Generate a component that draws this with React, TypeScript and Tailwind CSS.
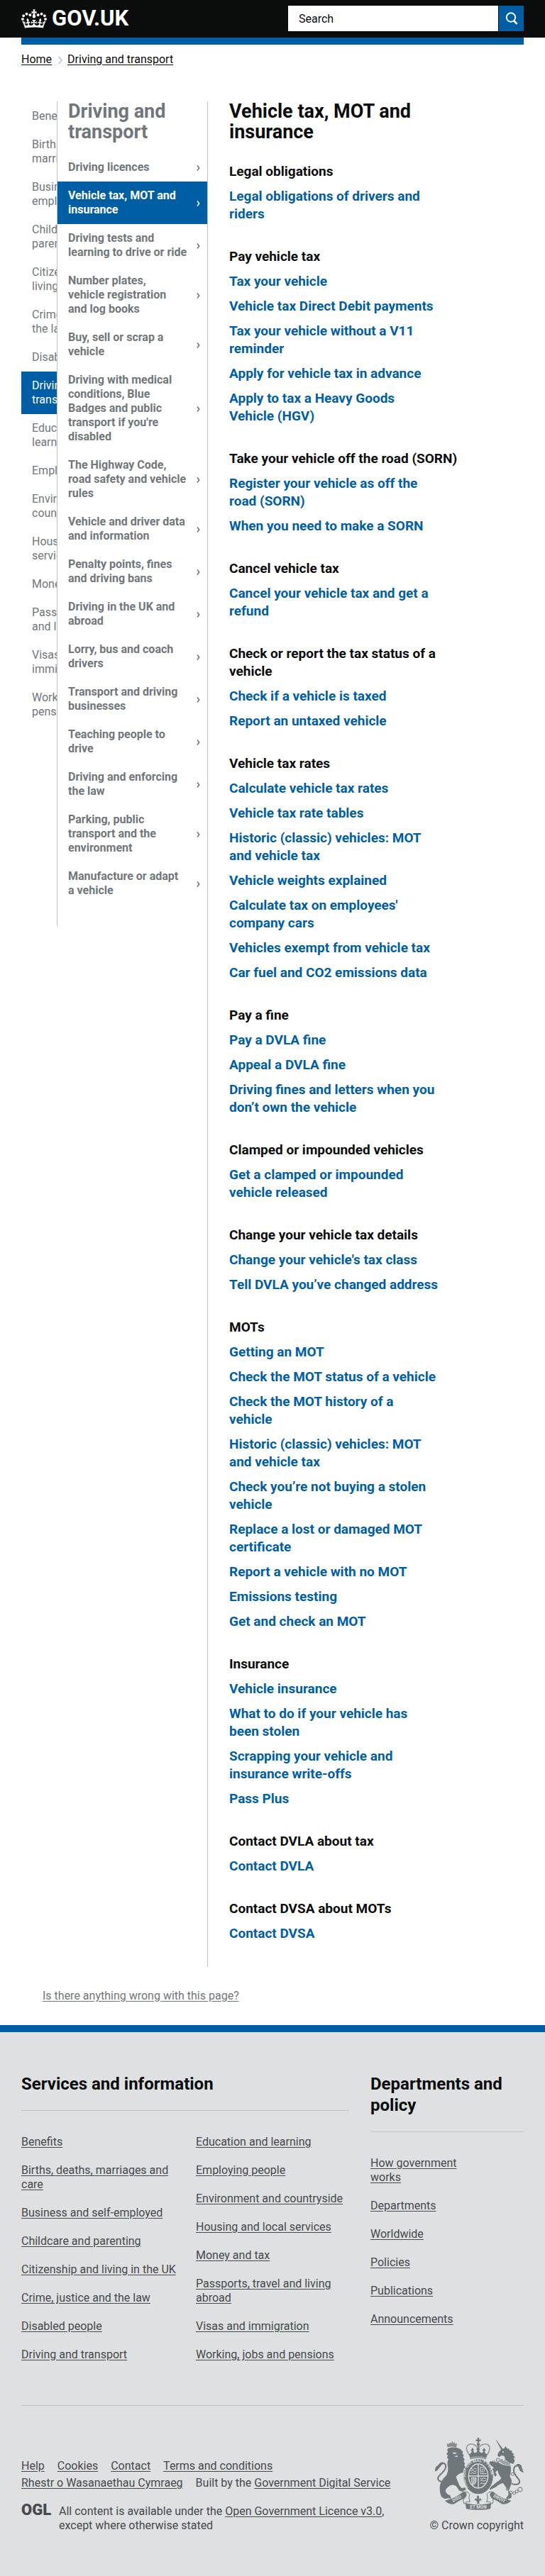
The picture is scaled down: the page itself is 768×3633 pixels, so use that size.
import type { ReactNode } from "react";

type Group = { title: string; links: string[] };

const topics = [
  "Benefits",
  "Births, deaths,\nmarriages and care",
  "Business and self-\nemployed",
  "Childcare and\nparenting",
  "Citizenship and\nliving in the UK",
  "Crime, justice and\nthe law",
  "Disabled people",
  "Driving and\ntransport",
  "Education and\nlearning",
  "Employing people",
  "Environment and\ncountryside",
  "Housing and local\nservices",
  "Money and tax",
  "Passports, travel\nand living abroad",
  "Visas and\nimmigration",
  "Working, jobs and\npensions",
];

const sections = [
  "Driving licences",
  "Vehicle tax, MOT and\ninsurance",
  "Driving tests and\nlearning to drive or ride",
  "Number plates,\nvehicle registration\nand log books",
  "Buy, sell or scrap a\nvehicle",
  "Driving with medical\nconditions, Blue\nBadges and public\ntransport if you're\ndisabled",
  "The Highway Code,\nroad safety and vehicle\nrules",
  "Vehicle and driver data\nand information",
  "Penalty points, fines\nand driving bans",
  "Driving in the UK and\nabroad",
  "Lorry, bus and coach\ndrivers",
  "Transport and driving\nbusinesses",
  "Teaching people to\ndrive",
  "Driving and enforcing\nthe law",
  "Parking, public\ntransport and the\nenvironment",
  "Manufacture or adapt\na vehicle",
];

const groups: Group[] = [
  { title: "Legal obligations", links: ["Legal obligations of drivers and\nriders"] },
  {
    title: "Pay vehicle tax",
    links: [
      "Tax your vehicle",
      "Vehicle tax Direct Debit payments",
      "Tax your vehicle without a V11\nreminder",
      "Apply for vehicle tax in advance",
      "Apply to tax a Heavy Goods\nVehicle (HGV)",
    ],
  },
  {
    title: "Take your vehicle off the road (SORN)",
    links: ["Register your vehicle as off the\nroad (SORN)", "When you need to make a SORN"],
  },
  { title: "Cancel vehicle tax", links: ["Cancel your vehicle tax and get a\nrefund"] },
  {
    title: "Check or report the tax status of a\nvehicle",
    links: ["Check if a vehicle is taxed", "Report an untaxed vehicle"],
  },
  {
    title: "Vehicle tax rates",
    links: [
      "Calculate vehicle tax rates",
      "Vehicle tax rate tables",
      "Historic (classic) vehicles: MOT\nand vehicle tax",
      "Vehicle weights explained",
      "Calculate tax on employees'\ncompany cars",
      "Vehicles exempt from vehicle tax",
      "Car fuel and CO2 emissions data",
    ],
  },
  {
    title: "Pay a fine",
    links: ["Pay a DVLA fine", "Appeal a DVLA fine", "Driving fines and letters when you\ndon’t own the vehicle"],
  },
  { title: "Clamped or impounded vehicles", links: ["Get a clamped or impounded\nvehicle released"] },
  {
    title: "Change your vehicle tax details",
    links: ["Change your vehicle's tax class", "Tell DVLA you’ve changed address"],
  },
  {
    title: "MOTs",
    links: [
      "Getting an MOT",
      "Check the MOT status of a vehicle",
      "Check the MOT history of a\nvehicle",
      "Historic (classic) vehicles: MOT\nand vehicle tax",
      "Check you’re not buying a stolen\nvehicle",
      "Replace a lost or damaged MOT\ncertificate",
      "Report a vehicle with no MOT",
      "Emissions testing",
      "Get and check an MOT",
    ],
  },
  {
    title: "Insurance",
    links: [
      "Vehicle insurance",
      "What to do if your vehicle has\nbeen stolen",
      "Scrapping your vehicle and\ninsurance write-offs",
      "Pass Plus",
    ],
  },
  { title: "Contact DVLA about tax", links: ["Contact DVLA"] },
  { title: "Contact DVSA about MOTs", links: ["Contact DVSA"] },
];

const footerServices = [
  [
    "Benefits",
    "Births, deaths, marriages and\ncare",
    "Business and self-employed",
    "Childcare and parenting",
    "Citizenship and living in the UK",
    "Crime, justice and the law",
    "Disabled people",
    "Driving and transport",
  ],
  [
    "Education and learning",
    "Employing people",
    "Environment and countryside",
    "Housing and local services",
    "Money and tax",
    "Passports, travel and living\nabroad",
    "Visas and immigration",
    "Working, jobs and pensions",
  ],
];

const footerPolicy = ["How government\nworks", "Departments", "Worldwide", "Policies", "Publications", "Announcements"];

function Crown() {
  return (
    <svg viewBox="0 0 132 97" className="h-[27px] w-[36px]" fill="currentColor" aria-hidden="true">
      <path d="M25 30.2c3.5 1.5 7.7-.2 9.1-3.7 1.5-3.6-.2-7.8-3.9-9.2-3.6-1.4-7.6.3-9.1 3.9-1.4 3.5.3 7.5 3.9 9zM9 39.5c3.6 1.5 7.8-.2 9.2-3.7 1.5-3.6-.2-7.8-3.9-9.1-3.6-1.5-7.6.2-9.1 3.8-1.4 3.5.3 7.5 3.8 9zM4.4 57.2c3.5 1.5 7.7-.2 9.1-3.8 1.5-3.6-.2-7.7-3.9-9.1-3.5-1.5-7.6.3-9.1 3.8-1.4 3.5.3 7.6 3.9 9.1zm38.3-21.4c3.5 1.5 7.7-.2 9.1-3.8 1.5-3.6-.2-7.7-3.9-9.1-3.6-1.5-7.6.3-9.1 3.8-1.3 3.6.4 7.7 3.9 9.1zm64.4-5.6c-3.6 1.5-7.8-.2-9.1-3.7-1.5-3.6.2-7.8 3.8-9.2 3.6-1.4 7.7.3 9.2 3.9 1.3 3.5-.4 7.5-3.9 9zm15.9 9.3c-3.6 1.5-7.7-.2-9.1-3.7-1.5-3.6.2-7.8 3.7-9.1 3.6-1.5 7.7.2 9.2 3.8 1.5 3.5-.3 7.5-3.8 9zm4.7 17.7c-3.6 1.5-7.8-.2-9.2-3.8-1.5-3.6.2-7.7 3.9-9.1 3.6-1.5 7.7.3 9.2 3.8 1.3 3.5-.4 7.6-3.9 9.1zM89.3 35.8c-3.6 1.5-7.8-.2-9.2-3.8-1.4-3.6.2-7.7 3.9-9.1 3.6-1.5 7.7.3 9.2 3.8 1.4 3.6-.3 7.7-3.9 9.1zM69.7 17.7l8.9 4.7V9.3l-8.9 2.8c-.2-.3-.5-.6-.9-.9L72.4 0H59.6l3.5 11.2c-.3.3-.6.5-.9.9l-8.8-2.8v13.1l8.8-4.7c.3.3.6.7.9.9l-5 15.4v.1c-.2.8-.4 1.6-.4 2.4 0 4.1 3.1 7.5 7 8.1h.2c.3 0 .7.1 1 .1.4 0 .7 0 1-.1h.2c4-.6 7.1-4.1 7.1-8.1 0-.8-.1-1.7-.4-2.4V34l-5.1-15.4c.4-.2.7-.6 1-.9zM66 92.8c16.9 0 32.8 1.1 47.1 3.2 4-16.9 8.9-26.7 14-33.5l-9.6-3.4c1 4.9 1.1 7.2 0 10.2-1.5-1.4-3-4.3-4.2-8.7L108.6 76c2.8-2 5-3.2 7.5-3.3-4.4 9.4-10 11.9-13.6 11.2-4.3-.8-6.3-4.6-5.6-7.9 1-4.7 5.7-5.9 8-.5 4.3-8.7-3-11.4-7.6-8.8 7.1-7.2 7.9-13.5 2.1-21.1-8 6.1-8.1 12.3-4.5 20.8-4.7-5.4-12.1-2.5-9.5 6.2 3.4-5.2 7.9-2 7.2 3.1-.6 4.3-6.4 7.8-13.5 7.2-10.3-.9-10.9-8-11.2-13.8 2.5-.5 7.1 1.8 11 7.3L80.2 60c-4.1 4.4-8 5.3-12.3 5.4 1.4-4.4 8-11.6 8-11.6H55.5s6.4 7.2 7.9 11.6c-4.2-.1-8-1-12.3-5.4l1.4 16.4c3.9-5.5 8.5-7.7 10.9-7.3-.3 5.8-.9 12.8-11.1 13.8-7.2.6-12.9-2.9-13.5-7.2-.7-5 3.8-8.3 7.1-3.1 2.7-8.7-4.6-11.6-9.4-6.2 3.7-8.5 3.6-14.7-4.6-20.8-5.8 7.6-5 13.9 2.2 21.1-4.7-2.6-11.9.1-7.7 8.8 2.3-5.5 7.1-4.2 8.1.5.7 3.3-1.3 7.1-5.7 7.9-3.5.7-9-1.8-13.5-11.2 2.5.1 4.7 1.3 7.5 3.3l-4.7-15.4c-1.2 4.4-2.7 7.2-4.3 8.7-1.1-3-.9-5.3 0-10.2l-9.5 3.4c5 6.9 9.9 16.7 14 33.5 14.8-2.1 30.8-3.2 47.7-3.2z" />
    </svg>
  );
}

function SearchIcon() {
  return (
    <svg viewBox="0 0 20 20" className="size-5" fill="none" stroke="currentColor" strokeWidth="2" aria-hidden="true">
      <circle cx="9" cy="8.5" r="6.2" />
      <path d="M13 13.2l4.6 4.6" strokeWidth="2.6" />
    </svg>
  );
}

function Chevron() {
  return (
    <svg viewBox="0 0 5 8" className="mt-0.5 h-2 w-[5px] shrink-0" fill="none" stroke="currentColor" strokeWidth="1.6" aria-hidden="true">
      <path d="M1 .6L3.600 4L1 7.400" />
    </svg>
  );
}

function Crest() {
  return (
    <svg viewBox="69 54 375 306" className="h-[102px] w-[125px] text-[#6f777b]" fill="currentColor" aria-hidden="true">
      <defs>
        <path id="garter-arc" d="M232 284C188 264 188 184 222 165C240 153 264 153 282 165C316 184 316 264 272 284" />
      </defs>
      {/* imperial crown */}
      <path d="M248 54h8l-1 8 7-1v8l-7-1 1 8h-8l1-8-7 1v-8l7 1zM246 77h12v10h-12z" />
      <path
        d="M214 126C194 100 203 81 221 81C237 81 247 90 251 106C255 90 266 81 282 81C300 81 308 100 289 126"
        fill="none"
        stroke="currentColor"
        strokeWidth="5"
        strokeDasharray="4 2"
      />
      <path d="M249 84h5v24h-5zM213 123c25-9 53-9 77 0l-3 15c-23-7-47-7-71 0z" />
      <path d="M220 121l5-12-6-1 9-12 6 12-4 1 7 12zM243 119l5-12-5-3 9-10 8 10-5 3 6 12zM268 121l6-11-5-2 8-12 7 13-5 1 3 12z" />
      <path d="M216 138c24-8 48-8 71 0l-2 8c-22-7-45-7-67 0z" opacity=".65" />
      {/* lion */}
      <path d="M122 94c-3-6-3-13 0-17l7 5 3-9 6 6 4-12 5 11 6-6 2 9 6-3c1 6 0 12-3 17-12-4-24-4-36-1z" opacity=".8" />
      <path d="M125 98Q150 90 175 101L188 114L184 120L191 128L187 134L194 146L190 152L196 164L192 170L204 184L206 196L202 206L190 204Q186 200 178 204Q160 212 158 222Q166 240 172 256L182 268L196 264L201 273L184 282L172 278L158 258Q146 250 134 256Q118 264 113 278Q116 292 133 298L137 312L124 310L110 313L96 304Q86 280 90 255Q96 232 118 212Q126 196 124 178Q118 160 126 144L119 138L124 130L117 122L124 114L120 106Z" />
      <path d="M142 115c5 2 8 3 12 1l8 3c-4 3-10 4-15 3zM151 130c5 3 10 1 13-2l1 5c-5 4-11 4-14-3z" fill="#dee0e2" />
      <path
        d="M98 240C80 237 77 225 87 214C101 200 119 186 114 170C111 160 98 160 92 169C88 178 81 184 71 190"
        fill="none"
        stroke="currentColor"
        strokeWidth="6"
      />
      <path d="M70 197c-2-14 3-24 13-27 6-13 16-15 25-11-8 9-15 12-23 22-2 8-7 14-15 16z" />
      {/* unicorn */}
      <path d="M325 61L330 66L357 103L350 107Z" />
      <path d="M347 105L361 99L367 90L374 100L384 101L382 106L396 110L393 116L403 123L399 128L407 136L402 142L406 152L400 165L384 160L366 147L362 132L350 129L340 136L333 128L337 117Z" />
      <circle cx="357" cy="114" r="3" fill="#dee0e2" />
      <path d="M345 146l9-3 5 10 7-7 3 10 8-5 1 10 8-5v14c-14 2-33-5-44-15z" opacity=".6" />
      <path d="M335 157Q356 175 388 172Q393 196 385 216L393 234Q394 252 379 279Q390 284 393 299L391 309L370 316Q369 306 379 298Q382 276 367 261L357 246Q338 250 328 262L303 274L296 266Q318 254 328 243Q342 236 350 225Q338 212 333 191L324 200L330 209L326 218L312 208L308 189L318 180L302 170L297 160L304 153L326 158Z" />
      <path
        d="M392 248C417 258 433 247 424 232C416 218 399 207 402 188C404 170 421 168 427 180"
        fill="none"
        stroke="currentColor"
        strokeWidth="6"
      />
      <path d="M413 166c13-4 22 2 23 13 3 9 5 16 8 23-12-3-18-8-20-18-1-7-5-12-11-18z" />
      <g fill="none" stroke="currentColor" strokeWidth="3">
        <circle cx="335" cy="148" r="7" />
        <circle cx="317" cy="158" r="6" />
        <circle cx="397" cy="208" r="6" />
        <circle cx="376" cy="271" r="6" />
        <circle cx="389" cy="286" r="7" />
        <circle cx="404" cy="288" r="6" />
        <circle cx="415" cy="281" r="6" />
        <circle cx="429" cy="273" r="9" />
      </g>
      {/* garter and shield */}
      <ellipse cx="252" cy="218" rx="65" ry="77" fill="#dee0e2" />
      <ellipse cx="252" cy="218" rx="62" ry="74" />
      <ellipse cx="252" cy="216" rx="43" ry="53" fill="#dee0e2" />
      <ellipse cx="252" cy="216" rx="39" ry="49" />
      <path d="M212 214h80v4h-80zM250 166h4v100h-4z" fill="#dee0e2" />
      <g fill="none" stroke="#dee0e2" strokeWidth="3">
        <path d="M222 184l8 4 6-5 9 4M220 195l9-3 7 5 9-4M220 206l9-4 6 4 9-4" />
        <path d="M260 179c8-3 15 0 20 7M261 206h25M261 179v23M268 201c-3-10 4-8 3-17M272 200c9-3 0-9 9-13" />
        <path d="M223 224h20c1 14-3 26-13 31-5-6-8-18-7-31M229 225v27M234 225v26M239 225v20" />
        <path d="M260 225l7 4 7-5 10 4M260 237l7-4 8 5 9-4M260 249l7-4 8 4 6-4" />
      </g>
      <text fontFamily="Roboto" fontSize="17" fontWeight="700" fill="#dee0e2">
        <textPath href="#garter-arc" startOffset="8%">
          HONI·SOIT·QUI·MAL·Y·PENSE
        </textPath>
      </text>
      {/* motto scroll */}
      <path d="M111 320c28-6 50-15 76-37 9-3 17-1 21 6l-3 19c-23 4-40 16-56 27-16 1-28-4-38-15z" />
      <path d="M391 320c-28-6-50-15-76-37-9-3-17-1-21 6l3 19c23 4 40 16 56 27 16 1 28-4 38-15z" />
      <g fill="#dee0e2" stroke="currentColor" strokeWidth="3">
        <path d="M190 285c13 0 14 11 8 20-10 7-12 18-5 29 6-9 12-10 24-9-6-15-5-24-1-32-6-9-15-12-26-8z" />
        <path d="M314 285c-13 0-14 11-8 20 10 7 12 18 5 29-6-9-12-10-24-9 6-15 5-24 1-32 6-9 15-12 26-8z" />
      </g>
      <path d="M197 330c34 10 75 10 110 0l-4 25c-33 6-69 6-102 0z" />
      <path d="M250 296l6 9-2 8c7-4 13-1 11 7l-7-3 1 6-4 2 2 8h-11l2-8-5-2 1-6-7 3c-2-8 4-11 11-7l-3-8z" />
      <g fill="#dee0e2" fontFamily="Roboto" fontWeight="700" fontSize="19" textAnchor="middle">
        <text x="252" y="354">
          ET MON
        </text>
        <text transform="translate(164 317) rotate(-28)">DIEU</text>
        <text transform="translate(338 317) rotate(29)">DROIT</text>
      </g>
    </svg>
  );
}

function FooterLink({ children }: { children: ReactNode }) {
  return (
    <a href="#" className="whitespace-pre underline underline-offset-2">
      {children}
    </a>
  );
}

function FooterList({ items }: { items: string[] }) {
  return (
    <ul className="flex min-w-0 flex-1 flex-col gap-5">
      {items.map((item) => (
        <li key={item}>
          <FooterLink>{item}</FooterLink>
        </li>
      ))}
    </ul>
  );
}

export default function App() {
  return (
    <div className="bg-white font-[Roboto,Arial,sans-serif] text-base leading-5 text-[#0b0c0c]">
      <header>
        <div className="bg-[#0b0c0c] px-[30px]">
          <div className="flex items-start justify-between pt-2 pb-[9px]">
            <a href="#" className="flex items-center gap-[7px] pt-1 text-[31px] leading-7 font-bold text-white">
              <Crown />
              GOV.UK
            </a>
            <form className="flex w-[332px] gap-px" onSubmit={(e) => e.preventDefault()}>
              <input
                type="search"
                aria-label="Search"
                placeholder="Search"
                className="h-9 min-w-0 flex-1 bg-white px-[15px] text-base text-[#0b0c0c] outline-none placeholder:text-[#0b0c0c]"
              />
              <button
                type="submit"
                aria-label="Search GOV.UK"
                className="flex h-9 w-[35px] items-center justify-center bg-[#005ea5] text-white"
              >
                <SearchIcon />
              </button>
            </form>
          </div>
        </div>
        <div className="mx-[30px] h-2.5 bg-[#005ea5]" />
      </header>

      <nav aria-label="Breadcrumb" className="px-[30px] pt-[11px]">
        <ol className="flex items-center">
          <li>
            <a href="#" className="underline underline-offset-2">
              Home
            </a>
          </li>
          <li className="flex items-center">
            <svg viewBox="0 0 8 12" className="mt-0.5 mr-1.5 ml-2 h-3 w-2" fill="none" stroke="#bfc1c3" strokeWidth="1.6" aria-hidden="true">
              <path d="M1.5 .8L6 6L1.500 11.200" />
            </svg>
            <a href="#" className="underline underline-offset-2">
              Driving and transport
            </a>
          </li>
        </ol>
      </nav>

      <main className="mx-[30px] flex items-start pt-[49px]">
        <nav aria-label="All categories" className="w-[50px] shrink-0 overflow-hidden pt-px">
          <ul className="w-[212px] text-[#6f777b]">
            {topics.map((topic) => (
              <li key={topic}>
                <a
                  href="#"
                  className={
                    topic.startsWith("Driving")
                      ? "block bg-[#005ea5] px-[15px] py-2.5 whitespace-pre-line text-white"
                      : "block px-[15px] py-2.5 whitespace-pre-line"
                  }
                >
                  {topic}
                </a>
              </li>
            ))}
          </ul>
        </nav>

        <nav
          aria-label="Driving and transport"
          className="w-[212px] shrink-0 border-l border-[#bfc1c3] pb-[30px] font-bold text-[#6f777b]"
        >
          <h2 className="px-[15px] pb-[15px] text-[27px] leading-[29px] whitespace-pre-line">{"Driving and\ntransport"}</h2>
          <ul>
            {sections.map((section) => (
              <li key={section}>
                <a
                  href="#"
                  className={
                    section.startsWith("Vehicle tax")
                      ? "flex items-center justify-between bg-[#005ea5] py-2.5 pr-2.5 pl-[15px] whitespace-pre text-white"
                      : "flex items-center justify-between py-2.5 pr-2.5 pl-[15px] whitespace-pre"
                  }
                >
                  <span>{section}</span>
                  <Chevron />
                </a>
              </li>
            ))}
          </ul>
        </nav>

        <div className="min-w-0 flex-1 border-l border-[#bfc1c3] pb-[35px] pl-[30px] text-[19px] leading-[25px] font-bold">
          <h1 className="pb-[28px] text-[27px] leading-[29px] whitespace-pre-line">{"Vehicle tax, MOT and\ninsurance"}</h1>
          <div className="flex flex-col gap-[35px]">
            {groups.map((group) => (
              <section key={group.title} className="flex flex-col gap-2.5">
                <h2 className="whitespace-pre-line">{group.title}</h2>
                <ul className="flex flex-col gap-2.5">
                  {group.links.map((link) => (
                    <li key={link}>
                      <a href="#" className="whitespace-pre-line text-[#005ea5]">
                        {link}
                      </a>
                    </li>
                  ))}
                </ul>
              </section>
            ))}
          </div>
        </div>
      </main>

      <div className="px-[60px] pt-[31px] pb-[31px]">
        <a href="#" className="text-[#6f777b] underline underline-offset-2">
          Is there anything wrong with this page?
        </a>
      </div>

      <footer className="border-t-[10px] border-[#005ea5] bg-[#dee0e2] px-[30px] pt-[58px] pb-[61px] text-[#454a4c]">
        <div className="flex gap-[30px] border-b border-[#bfc1c3] pb-[61px]">
          <section className="min-w-0 flex-[462]">
            <h2 className="border-b border-[#bfc1c3] pb-[22px] text-2xl leading-[30px] font-bold text-[#0b0c0c]">
              Services and information
            </h2>
            <div className="flex gap-[30px] pt-[34px]">
              {footerServices.map((items) => (
                <FooterList key={items[0]} items={items} />
              ))}
            </div>
          </section>
          <section className="min-w-0 flex-[216]">
            <h2 className="border-b border-[#bfc1c3] pb-[22px] text-2xl leading-[30px] font-bold whitespace-pre-line text-[#0b0c0c]">
              {"Departments and\npolicy"}
            </h2>
            <div className="flex pt-[34px]">
              <FooterList items={footerPolicy} />
            </div>
          </section>
        </div>

        <div className="flex items-end justify-between pt-[45px]">
          <div className="flex flex-col">
            <ul className="flex gap-[18px]">
              {["Help", "Cookies", "Contact", "Terms and conditions"].map((item) => (
                <li key={item}>
                  <FooterLink>{item}</FooterLink>
                </li>
              ))}
            </ul>
            <ul className="mt-1 flex gap-[18px]">
              <li>
                <FooterLink>Rhestr o Wasanaethau Cymraeg</FooterLink>
              </li>
              <li>
                Built by the <FooterLink>Government Digital Service</FooterLink>
              </li>
            </ul>
            <div className="mt-5 flex items-start gap-3">
              <span className="w-[41px] text-[22px] leading-4 font-black">OGL</span>
              <p>
                All content is available under the <FooterLink>Open Government Licence v3.0</FooterLink>,
                <br />
                except where otherwise stated
              </p>
            </div>
          </div>
          <a href="#" className="flex flex-col items-end gap-3">
            <Crest />
            © Crown copyright
          </a>
        </div>
      </footer>
    </div>
  );
}
